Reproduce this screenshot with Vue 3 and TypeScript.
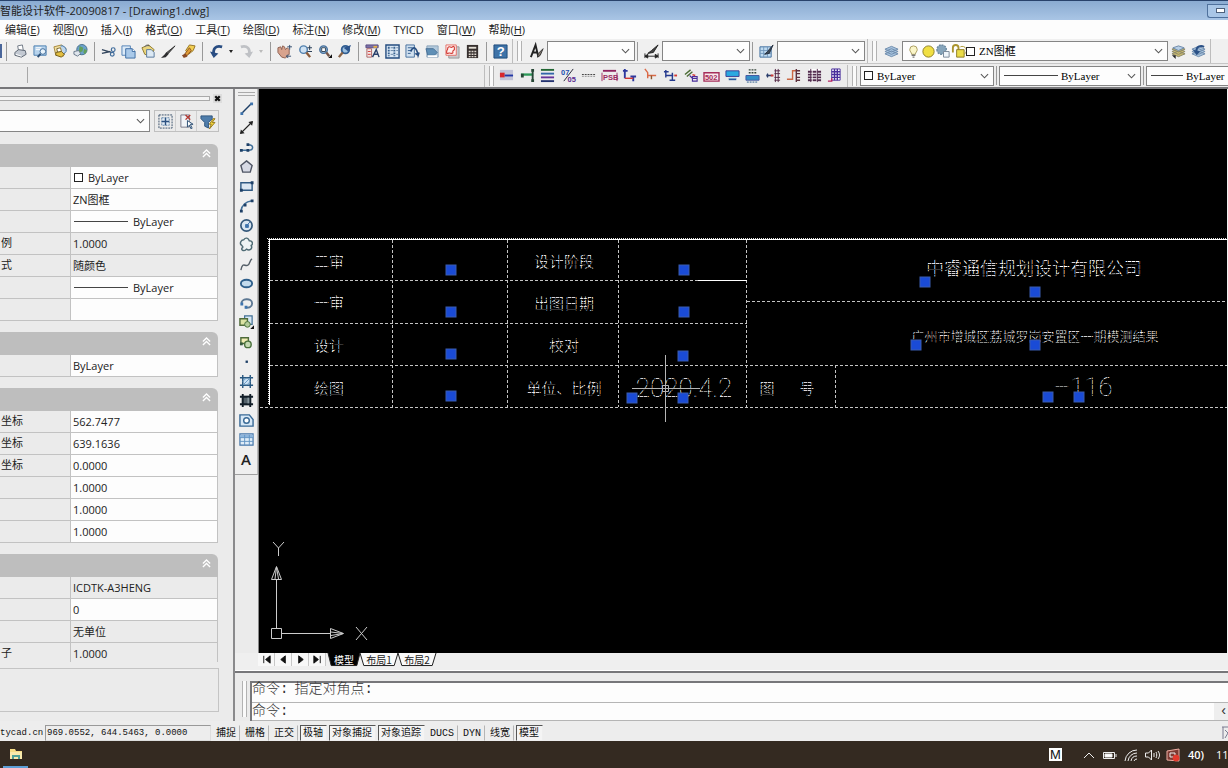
<script setup lang="ts">
type Shape = { d?: string; f?: string; s?: string; w?: number; dash?: string; t?: string; x?: number; y?: number; z?: number }
type Icon = Shape[]

const P = (d: string, f = 'none', s = 'none', w = 1, dash = ''): Shape => ({ d, f, s, w, dash })
const T = (t: string, x: number, y: number, z: number, f: string): Shape => ({ t, x, y, z, f })

const navy = '#1d3f66'
const blue = '#3f74ad'
const pale = '#bcd5ec'
const gold = '#e3bf42'
const red = '#d23a34'
const purple = '#4a2f9c'
const lens = 'M3 6a4 4 0 1 0 8 0a4 4 0 1 0-8 0'
const sheets = 'M1 10.5l7 3 7-3-7-3zM1 8l7 3 7-3-7-3zM1 5.500l7 3 7-3-7-3z'

const icons: Record<string, Icon> = {
  print: [P('M5 2l5-1 1 6-5 1z', '#fff', '#6d7683'), P('M2 9l4-3 7 1 1 4-5 3-7-2z', '#c3c9d2', '#5a6370'), P('M3 11l6 2', 'none', '#fff')],
  preview: [P('M1 2h13v10H1z', '#b7d3ec', '#4c7fb0'), P('M3 4h6M3 6h5', 'none', '#fff'), P('M7.500 8a3 3 0 1 0 6 0a3 3 0 1 0-6 0', '#e8f3fb', '#3c6896'), P('M8 10.500L5 14', 'none', '#2b4d73', 2)],
  publish: [P('M1 3l8-2 5 4-3 8-8-1z', '#f1dfa0', '#a5853a'), P('M8 2a5 5 0 0 1 6 6l-3 3', pale, blue), P('M4 5l4-1 1 4-4 1z', '#fff', '#7c6a33'), P('M3 9l6-1 3 3-3 3-6-2z', gold, '#705c1e')],
  web: [P('M4 6a5.500 5.500 0 1 0 11 0a5.500 5.500 0 1 0-11 0', '#6ba1cc', '#456f8b'), P('M7 2l4 2-1 4-4 1zM12 5l3 2-2 4-2-2z', '#62a05c'), P('M1 8l5-1 2 3-3 3-4-2z', '#dfe5ec', '#67788a')],
  cut: [P('M1 6l10 3M1 10l9-2', 'none', '#34475e', 1.5), P('M11 6a2 2 0 1 0 4 0a2 2 0 1 0-4 0M10 11a2 2 0 1 0 4 0a2 2 0 1 0-4 0', 'none', '#3f6b9b', 1.300)],
  copy: [P('M1 2h9v10H1z', '#dceaf7', '#5382b5'), P('M5 5h7l3 3v7H5z', '#a9c9e9', '#3c6da3'), P('M12 5v3h3', '#fff', '#3c6da3')],
  paste: [P('M1 4l7-3 6 5-3 7-7-2z', '#ead57d', '#8d782c'), P('M6 6h5l3 3v5H6z', '#dce9f4', '#55759a'), P('M4 3l2-2 3 1', '#aaa', '#555')],
  match: [P('M15 2l-8 9-2-1z', '#555', '#333'), P('M6 9l2 2-3 3-5 1 3-3z', '#2d2d2f')],
  brush: [P('M9 1l6 1-2 5-5 4-3-4z', '#f2cf53', '#927021'), P('M9 4L3 12l2 2 6-7z', '#df9b34', '#8e5521'), P('M1 12l4-2 2 3-4 2z', '#8a4a26')],
  undo: [P('M14 3C7 1 4 5 5 12', 'none', '#294d82', 3), P('M1 8l4 7 5-5z', '#294d82')],
  redo: [P('M2 3c7-2 10 2 9 9', 'none', '#bfc1c5', 3), P('M15 8l-4 7-5-5z', '#bfc1c5')],
  pan: [P('M1 4l3-1 1 3 1-4 2 1 1 3 2-2 2 2 0 5-4 4-4-1-4-5z', '#d8a38d', '#8c5f50'), P('M11 3h5M13.500 1v5M10 13h5M12 11l-2 2 2 2', 'none', '#314b6d')],
  zoompm: [P(lens, '#cfe2f3', '#4f7fae', 1.500), P('M10 9l4 5', 'none', '#8a5b3a', 2.500), P('M11 4h5M13.500 1.500v5M11 8h5', 'none', '#203650')],
  zoomwin: [P(lens, '#9dc1e0', '#456f9c', 1.500), P('M5 4h4v4H5z', '#fff', '#345'), P('M10 9l3 4', 'none', '#735447', 2.500), P('M12 15h4v-4z', '#111')],
  zoomprev: [P('M5 6a4 4 0 1 0 8 0a4 4 0 1 0-8 0', '#9dc1e0', '#315e92', 2), P('M6 9l-4 5', 'none', '#896346', 2.500), P('M15 1L7 4l5 4z', '#2c548d')],
  props: [P('M1 1h13v3H1z', '#7d72a7', '#584b83'), P('M2 5h5v9H2z', '#f4e6e6', '#a66'), P('M3 8h3M3 11h3', 'none', red), P('M8 14l4-8 3 8M9 11h5', 'none', '#29406b', 1.500), P('M9 2h4v2H9z', '#e4b048')],
  center: [P('M1 1h14v14H1z', '#dbe8f5', '#244c7f', 1.500), P('M4 3v10M10 3v10', 'none', '#36608f', 2, '2 1'), P('M6 4h3M6 7h3M6 11h3M12 4h3M12 7h2M12 11h2', 'none', '#6785a5')],
  palettes: [P('M1 1h9v13H1z', '#d1e1f0', '#456f9d'), P('M3 4h5M3 7h4M3 10h3', 'none', '#315d8f'), P('M6 8c3-6 6-5 8 4l1-3M14 12l-3-2', 'none', '#294f82', 1.800)],
  sheet: [P('M2 2h12v12H2z', '#b2c9dc', '#8ba2ba'), P('M1 5h8l4 4-3 3H3z', '#5f8fb6', '#486f94'), P('M3 13h10', 'none', '#fff', 2)],
  markup: [P('M4 3h11v12H4z', '#c8c8cb', '#999'), P('M1 1h11v11H1z', '#fff1ef', '#e26d66'), P('M3 4c2-3 3 1 5-1s3 3 1 4 1 3-2 3-2-1-4 0-1-3-1-3 1-1 1-3z', 'none', red, 1.200)],
  calc: [P('M2 1h12v14H2z', '#37302f'), P('M4 3h8v2H4z', '#e4dfd5'), P('M4 8h8M4 11h8M4 13.500h8', 'none', '#ded7cf', 1.500, '2 1')],
  help: [P('M1 1h14v14H1z', '#3e73a8', '#1e4a7a'), T('?', 4, 13, 14, '#fff')],
  textstyle: [P('M2 14L7 1l3 13M3.500 9h5', 'none', '#222', 2), P('M15 5l-5 5-1 4 3-2z', '#82776d', '#333')],
  dimstyle: [P('M1 10v5M15 10v5M1 13h14M1 13l3-2v4zM15 13l-3-2v4z', '#222', '#222'), P('M15 1L8 7l-4 3 6-1z', '#444', '#222')],
  tablestyle: [P('M1 3h12v11H1z', '#c0dbf0', '#3e6d9d'), P('M1 7h12M1 10h12M5 3v11M9 3v11', 'none', '#7298bd'), P('M15 1l-6 7-3 3 5-1z', '#3c4856', '#243040')],
  layers: [P(sheets, '#a8c3de', '#6e8cac')],
  layergo: [P(sheets, '#c9b96f', '#8a8668'), P('M2 4l6-2 6 2-6 3z', '#b6cee5', '#6f8cae'), P('M1 12h4v4z', '#222')],
  layerback: [P(sheets, '#a8c3de', '#6e8cac'), P('M6 8c-1-5 4-7 8-5', 'none', '#2a5086', 2), P('M2 6l4 6 4-4z', '#2a5086')],
  bulb: [P('M4 6a4 4 0 1 1 8 0c0 2-2 3-2 5H6c0-2-2-3-2-5z', '#fbf6c9', '#a89a5c'), P('M6 12h4M7 14h2', 'none', '#777', 1.500)],
  sun: [P('M2 8a6 6 0 1 0 12 0a6 6 0 1 0-12 0', '#f0df43', '#8a7b23')],
  snow: [P('M1 6a5 5 0 1 0 10 0a5 5 0 1 0-10 0', '#87a5bb', '#6c899f', 1.500, '2 1'), P('M8 8h6v6H8z', '#eef5fb', '#789')],
  lock: [P('M2 9V4a3 3 0 0 1 6 0v2', 'none', '#aa942e', 2), P('M6 6h8v8H6z', '#eadc48', '#8d7c26'), P('M10 3a4 4 0 0 1 4 8', 'none', '#aa942e')],
  a1: [P('M1 2h14v11H1z', '#c1c2d6'), P('M1 5h5v5H1z', '#d8262b'), P('M6 8h9', 'none', '#2238a5', 2)],
  a2: [P('M1 7h13', 'none', '#2c9a58', 2.500), P('M1 6h3v4H1zM12 1h3v3h-3zM12 12h3v3h-3z', '#274736'), P('M13.500 3v10', 'none', '#274736', 2)],
  a3: [P('M1 2h14', 'none', '#263', 2), P('M1 6h14', 'none', '#36a', 2), P('M1 10h14', 'none', '#639', 2), P('M1 14h14', 'none', '#23326f', 2)],
  a4: [T('07', 0, 7, 8, '#234fae'), T('05', 7, 15, 8, '#5a2c91'), P('M3 14L13 1', 'none', '#223', 1)],
  a5: [P('M1 7h15', 'none', '#333', 1, '2 1'), P('M1 9h15', 'none', '#999', 1, '2 1')],
  a6: [P('M1 3h14', 'none', '#8e245f', 2), T('PSB', 1, 13, 8, '#9b2c62'), P('M0 5v9M16 5v9', 'none', '#9b2c62')],
  a7: [P('M3 1v10M1 3h5M9 9h6M12 9v5', 'none', '#2e389e', 2), P('M3 11h9', 'none', red, 1.500)],
  a8: [P('M2 1l3 4v6M5 8h9', 'none', '#da6a48', 1.500), P('M9 8v4', 'none', '#8d572c', 1.500)],
  a9: [P('M3 2v8M1 4h5M3 8h8M10 5v8M7 13h6', 'none', '#253a8e', 1.500), P('M12 8h3', 'none', red, 2)],
  a10: [P('M1 7l6-5M3 9l6-5', 'none', '#4b6c35', 1.500), P('M6 8l3 3h5M9 9h5v5H9z', 'none', purple, 1.200), P('M9 7l3 1', 'none', red, 1.500)],
  a11: [P('M0 5h16v9H0z', '#fae9ed', '#a52f5b', 1.500), T('502', 1, 13, 8, '#a52f5b')],
  a12: [P('M1 3h14v6H1z', '#2aa9e1', '#3b3b91'), P('M4 12h8', 'none', '#27599d', 2), P('M4 11h8', 'none', '#79afd6', 1)],
  a13: [P('M4 2h9M4 5h9', 'none', '#37463c', 1.500, '2 1'), P('M1 8h14v5H1z', '#338fc7', '#4155a0'), P('M2 15h12', 'none', '#258', 1, '2 1')],
  a14: [P('M1 8h6M2 6l-1 2 1 2', 'none', '#293d6b', 1.500), P('M5 8h3', 'none', red, 2), P('M10 1v14M13 1v14M9 3h6M9 6h6M9 10h6M9 13h6', 'none', '#542844', 1)],
  a15: [P('M1 12h6V3h4', 'none', '#cb6845', 1.500), P('M11 1v14M11 3h4M11 6h4M11 10h4M11 13h4', 'none', '#5e313d', 1.500)],
  a16: [P('M2 1h12v14H2z', '#fff'), P('M1 4h14M1 7h14M1 10h14M1 13h14', 'none', '#512b4d', 2, '4 1'), P('M4 1v14M11 1v14', 'none', '#512b4d')],
  a17: [P('M5 1h9v12H5z', '#fff', purple), P('M5 4h9M5 7h9M5 10h9M8 1v12M11 1v12', 'none', purple, 1.500), P('M1 14h4v-3', 'none', '#b82361', 1.500)],
  line: [P('M3 13L13 3', 'none', navy, 1.500), P('M1.500 12h3v3h-3zM12 1.500h3v3h-3z', blue)],
  xline: [P('M2 14L14 2', 'none', '#222', 1.500), P('M1 15l1-5 4 4zM15 1l-1 5-4-4z', '#222')],
  pline: [P('M2 11h8c6 0 6-6 0-6', 'none', '#416f98', 1.600), P('M1 9.500h3v3H1zM8 9.500h3v3H8zM8 3.500h3v3H8z', navy)],
  polygon: [P('M8 2l6 5-2 7H4L2 7z', '#d7dae5', '#4f5564', 1.500)],
  rect: [P('M2 4h12v8H2z', '#dce7f2', '#305a83', 1.500), P('M1 10.500h3v3H1zM12.500 2.500h3v3h-3z', navy)],
  arc: [P('M2 14C3 7 7 4 14 3', 'none', '#416f98', 1.500), P('M1 12.500h3v3H1zM5 6h3v3H5zM12.500 1.500h3v3h-3z', navy)],
  circle: [P('M2 8a6 6 0 1 0 12 0a6 6 0 1 0-12 0', '#d8e6f1', '#34587a', 1.800), P('M8 8l4-4M7 7h3v3H7z', blue, blue)],
  cloud: [P('M5 3c2-3 5-2 6 1 4 0 4 4 2 5 2 4-2 6-5 4-2 3-6 1-5-1 2-1 1-2 0-3-3-2-1-6 2-6z', '#edf4f4', '#4e6b74', 1.500)],
  spline: [P('M2 14c2-9 4-4 7-5s2-6 5-7', 'none', '#555f68', 1.500)],
  ellipse: [P('M2 8a6 4 0 1 0 12 0a6 4 0 1 0-12 0', '#c3dbed', '#2e5f8b', 2)],
  earc: [P('M3 8C1 3 14 1 14 8c0 4-4 5-7 4', 'none', '#5d7893', 2), P('M1.500 7h3v3h-3zM6 10.500h3v3H6z', blue)],
  insert: [P('M6 1h8v9H6z', '#d8e8f5', '#427095', 1.300), P('M1 4h8v7H1z', '#dce3a4', '#4e6b3a', 1.500), P('M6 10a3 3 0 1 0 6 0a3 3 0 1 0-6 0', '#b4cc9a', '#49703b'), P('M12 15h4v-4z', '#111')],
  block: [P('M2 3h8v6H2z', '#f1edb4', '#4e6b3a', 1.500), P('M6 10a3.500 3.500 0 1 0 7 0a3.500 3.500 0 1 0-7 0', '#c4d9b2', '#49703b', 1.500), P('M1 8h3v3H1z', '#35593c')],
  point: [P('M7 7h2.500v2.500H7z', navy)],
  hatch: [P('M3 3h10v10H3z', '#cbe2f5'), P('M4 1v14M12 1v14M1 4h14M1 12h14', 'none', '#28577f', 1.500), P('M4 8l4-4M4 12l8-8M8 12l4-4', 'none', '#6698c0')],
  gradient: [P('M3 3h10v10H3z', '#53616a'), P('M4 1v14M12 1v14M1 4h14M1 12h14', 'none', '#111d27', 2), P('M9 5h2v6H9z', '#86969d')],
  region: [P('M1 2h10l4 5v7H1z', '#d7e8f6', '#386996', 1.500), P('M5 8a3 3 0 1 0 6 0a3 3 0 1 0-6 0', '#fff', '#386996', 1.500)],
  table: [P('M1 2h14v12H1z', '#e0edf8', '#4677a9', 1.300), P('M1 3h14v3H1z', '#8db5dc'), P('M1 6h14M1 10h14M6 3v11M11 3v11', 'none', '#6394c3')],
  quick: [P('M1 1h14v14H1z', 'none', '#334c66', 1, '2 1'), P('M4 4h8v8H4z', '#e2edf7', '#6083a8', 1, '2 1'), P('M8 4v8M4 8h8', 'none', '#2b5180', 1.500)],
  pick: [P('M2 1h9v13H2z', '#f0f3f7', '#778'), P('M7 1l5 5M12 1L7 6', 'none', '#b43630', 1.500), P('M9 7v7l2-2 2 4 1-1-2-4h3z', '#fff', '#244970')],
  filter: [P('M1 2h12v3l-4 4v6l-4-2V9L1 5z', '#4f7dab', '#2e547e'), P('M14 5l-4 6h2l-2 5 6-7h-3l3-4z', '#f2d53b', '#94771c')],
}

const fileTools = ['print', 'preview', 'publish', 'web', '|', 'cut', 'copy', 'paste', 'match', 'brush', '|', 'undo', '.', 'redo', '.', '|', 'pan', 'zoompm', 'zoomwin', 'zoomprev', '|', 'props', 'center', 'palettes', 'sheet', 'markup', 'calc', '|', 'help']
const drawTools = ['line', 'xline', 'pline', 'polygon', 'rect', 'arc', 'circle', 'cloud', 'spline', 'ellipse', 'earc', 'insert', 'block', 'point', 'hatch', 'gradient', 'region', 'table']
const plantTools = Array.from({ length: 17 }, (_, i) => 'a' + (i + 1))

const menus: [string, string][] = [['编辑', 'E'], ['视图', 'V'], ['插入', 'I'], ['格式', 'O'], ['工具', 'T'], ['绘图', 'D'], ['标注', 'N'], ['修改', 'M'], ['TYICD', ''], ['窗口', 'W'], ['帮助', 'H']]

type Row = { k: string; v: string; ro?: boolean; box?: boolean; rule?: boolean }
const groups: Row[][] = [
  [{ k: '', v: 'ByLayer', box: true }, { k: '', v: 'ZN图框' }, { k: '', v: 'ByLayer', rule: true }, { k: '例', v: '1.0000', ro: true }, { k: '式', v: '随颜色', ro: true }, { k: '', v: 'ByLayer', rule: true }, { k: '', v: '' }],
  [{ k: '', v: 'ByLayer' }],
  [{ k: '坐标', v: '562.7477' }, { k: '坐标', v: '639.1636' }, { k: '坐标', v: '0.0000' }, { k: '', v: '1.0000' }, { k: '', v: '1.0000' }, { k: '', v: '1.0000' }],
  [{ k: '', v: 'ICDTK-A3HENG', ro: true }, { k: '', v: '0' }, { k: '', v: '无单位', ro: true }, { k: '子', v: '1.0000', ro: true }],
]

const toggles: [string, boolean][] = [['捕捉', false], ['栅格', false], ['正交', false], ['极轴', true], ['对象捕捉', true], ['对象追踪', true], ['DUCS', false], ['DYN', false], ['线宽', false], ['模型', true]]
const navs = ['M3 2v8M10 2L5 6l5 4z', 'M8 2L3 6l5 4z', 'M4 2l5 4-5 4z', 'M9 2v8M2 2l5 4-5 4z']
const tabs = ['模型', '布局1', '布局2']

const dashed = [
  'M270 280.500H747', 'M270 323.500H747', 'M270 365.500H2600', 'M260 407.500H2600', 'M747 301.500H2600',
  'M392.500 240V407', 'M507.500 240V407', 'M618.500 240V407', 'M746.500 240V407', 'M835.500 365V407',
]
const grips = [[451, 270], [451, 312], [451, 354], [451, 396], [684, 270], [684, 312], [683, 356], [683, 398], [632, 398], [925, 282], [1035, 292], [916, 345], [1035, 345], [1048, 397], [1079, 397]]
const notes: [string, number, number, string][] = [
  ['二审', 329, 267, 's'], ['一审', 329, 308, 's'], ['设计', 329, 351, 's'], ['绘图', 329, 394, 's'],
  ['设计阶段', 564, 267, 's'], ['出图日期', 564, 309, 's'], ['校对', 564, 351, 's'], ['单位、比例', 564, 394, 's'],
  ['图', 767, 394, 's'], ['号', 807, 394, 's'],
  ['中睿通信规划设计有限公司', 1034, 275, 'l'], ['广州市增城区荔城罗岗安置区一期模测结果', 1035, 341, 'm'],
  ['2020.4.2', 684, 397, 'n'], ['–116', 1083, 396, 'n'],
]
</script>

<template>
  <div class="app">
    <header class="title">
      <span>智能设计软件-20090817 - [Drawing1.dwg]</span>
      <button class="min" aria-label="最小化"><i></i></button>
    </header>

    <nav class="menu">
      <button v-for="m in menus" :key="m[0]">{{ m[0] }}<template v-if="m[1]">(<u>{{ m[1] }}</u>)</template></button>
    </nav>

    <div class="bar">
      <i class="stub"></i><i class="sep"></i>
      <template v-for="(n, i) in fileTools" :key="i">
        <i v-if="n === '|'" class="sep"></i>
        <button v-else-if="n === '.'" class="drop" :class="{ off: i > 13 }" aria-label="更多"><i></i></button>
        <button v-else class="tool" :aria-label="n">
          <svg viewBox="0 0 16 16"><template v-for="(p, j) in icons[n]" :key="j"><path v-if="p.d" :d="p.d" :fill="p.f" :stroke="p.s" :stroke-width="p.w" :stroke-dasharray="p.dash" /><text v-else :x="p.x" :y="p.y" :font-size="p.z" :fill="p.f">{{ p.t }}</text></template></svg>
        </button>
      </template>
      <i class="edge"></i><i class="grip"></i>
      <template v-for="(n, i) in ['textstyle', 'dimstyle', 'tablestyle']" :key="n">
        <i v-if="i" class="sep thin"></i>
        <button class="tool wide" :aria-label="n">
          <svg viewBox="0 0 16 16"><path v-for="(p, j) in icons[n]" :key="j" :d="p.d" :fill="p.f" :stroke="p.s" :stroke-width="p.w" /></svg>
        </button>
        <div class="combo style">
          <select :aria-label="n"><option></option></select>
          <svg class="chev" viewBox="0 0 10 6"><path d="M1 1l4 4 4-4" /></svg>
        </div>
      </template>
      <i class="edge"></i><i class="grip"></i>
      <button class="tool wide" aria-label="图层特性">
        <svg viewBox="0 0 16 16"><path v-for="(p, j) in icons.layers" :key="j" :d="p.d" :fill="p.f" :stroke="p.s" /></svg>
      </button>
      <div class="combo layer">
        <svg v-for="n in ['bulb', 'sun', 'snow', 'lock']" :key="n" class="state" viewBox="0 0 16 16"><path v-for="(p, j) in icons[n]" :key="j" :d="p.d" :fill="p.f" :stroke="p.s" :stroke-width="p.w" :stroke-dasharray="p.dash" /></svg>
        <i class="swatch"></i>
        <select aria-label="图层"><option>ZN图框</option></select>
        <svg class="chev" viewBox="0 0 10 6"><path d="M1 1l4 4 4-4" /></svg>
      </div>
      <button v-for="n in ['layergo', 'layerback']" :key="n" class="tool" :aria-label="n">
        <svg viewBox="0 0 16 16"><path v-for="(p, j) in icons[n]" :key="j" :d="p.d" :fill="p.f" :stroke="p.s" :stroke-width="p.w" /></svg>
      </button>
      <i class="edge"></i>
    </div>

    <div class="bar second">
      <div class="lead"><i></i></div>
      <i class="edge"></i><i class="grip"></i>
      <div class="plant">
        <button v-for="n in plantTools" :key="n" :aria-label="n">
          <svg viewBox="0 0 16 16"><template v-for="(p, j) in icons[n]" :key="j"><path v-if="p.d" :d="p.d" :fill="p.f" :stroke="p.s" :stroke-width="p.w" :stroke-dasharray="p.dash" /><text v-else :x="p.x" :y="p.y" :font-size="p.z" :fill="p.f">{{ p.t }}</text></template></svg>
        </button>
      </div>
      <i class="edge"></i><i class="grip"></i>
      <div class="combo serif color">
        <i class="swatch"></i>
        <select aria-label="颜色"><option>ByLayer</option></select>
        <svg class="chev" viewBox="0 0 10 6"><path d="M1 1l4 4 4-4" /></svg>
      </div>
      <i class="sep thin"></i>
      <div class="combo serif ltype">
        <i class="rule"></i>
        <select aria-label="线型"><option>ByLayer</option></select>
        <svg class="chev" viewBox="0 0 10 6"><path d="M1 1l4 4 4-4" /></svg>
      </div>
      <i class="sep thin"></i>
      <div class="combo serif weight">
        <i class="rule short"></i>
        <select aria-label="线宽"><option>ByLayer</option></select>
      </div>
    </div>

    <main class="work">
      <aside class="panel">
        <div class="cap"><i></i><button aria-label="关闭"><svg viewBox="0 0 8 8"><path d="M2 2l4 4M6 2L2 6" /></svg></button></div>
        <div class="pick">
          <div class="combo">
            <select aria-label="对象类型"><option></option></select>
            <svg class="chev" viewBox="0 0 10 6"><path d="M1 1l4 4 4-4" /></svg>
          </div>
          <div class="trio">
            <button v-for="n in ['quick', 'pick', 'filter']" :key="n" :aria-label="n">
              <svg viewBox="0 0 16 16"><path v-for="(p, j) in icons[n]" :key="j" :d="p.d" :fill="p.f" :stroke="p.s" :stroke-width="p.w" :stroke-dasharray="p.dash" /></svg>
            </button>
          </div>
        </div>
        <div class="props">
          <section v-for="(g, gi) in groups" :key="gi">
            <button class="head" aria-label="折叠"><svg viewBox="0 0 10 10"><path d="M1 5l4-4 4 4M1 9l4-4 4 4" /></svg></button>
            <table>
              <tbody>
                <tr v-for="(r, ri) in g" :key="ri">
                  <th scope="row">{{ r.k }}</th>
                  <td :class="{ ro: r.ro }"><div><i v-if="r.box" class="swatch"></i><i v-if="r.rule" class="rule"></i>{{ r.v }}</div></td>
                </tr>
              </tbody>
            </table>
          </section>
        </div>
        <div class="hint"></div>
      </aside>

      <div class="right">
        <div class="stage">
          <div class="draw">
            <div class="strip">
              <i class="hgrip"></i>
              <button v-for="n in drawTools" :key="n" :aria-label="n">
                <svg viewBox="0 0 16 16"><path v-for="(p, j) in icons[n]" :key="j" :d="p.d" :fill="p.f" :stroke="p.s" :stroke-width="p.w" /></svg>
              </button>
              <button class="mtext">A</button>
            </div>
          </div>
          <div class="view">
            <svg class="cad" width="100%" height="100%">
              <defs>
                <pattern id="broken" width="4" height="5" patternUnits="userSpaceOnUse">
                  <path d="M0 0h4v4H0z" fill="#fff" />
                  <path d="M3 0h1v4H3z" fill="#000" fill-opacity=".55" />
                  <path d="M0 4h4v1H0z" fill="#fff" fill-opacity=".25" />
                </pattern>
              </defs>
              <g transform="translate(-260 -89)">
                <path d="M269 239.500H2600M269.500 239V405" class="solid" />
                <path d="M267 238.500H2600M268.500 239V405" class="dots" />
                <path v-for="d in dashed" :key="d" :d="d" class="dash" />
                <path d="M698 280.500H747" class="solid" />
                <text v-for="n in notes" :key="n[0]" :x="n[1]" :y="n[2]" :class="n[3]" class="note">{{ n[0] }}</text>
                <rect v-for="(g, i) in grips" :key="i" :x="g[0] - 5" :y="g[1] - 5" width="10" height="10" class="node" />
                <path class="cross" d="M665.500 355V422M632 388.500H700M662.500 385.500h6v6h-6z" />
                <path class="ucs" d="M271.500 628.500h10v10h-10zM276.500 628V579M271.500 579.500h10l-5-13zM275 579l1.500-12 2 12M282 633.500h49M330.500 628.500v10l13-5zM331 632l12 1.500-12 2M273 542l5.500 6 5.500-6M278.500 548v8M356 627l11 13M367 627l-11 13" />
              </g>
            </svg>
          </div>
        </div>
        <div class="tabs">
          <button v-for="(d, i) in navs" :key="i" class="nav" aria-label="翻页"><svg viewBox="0 0 12 12"><path :d="d" /></svg></button>
          <button v-for="(t, i) in tabs" :key="t" class="tab" :class="{ on: i === 0 }">
            <svg viewBox="0 0 40 14" preserveAspectRatio="none"><path d="M0 0l4 13.500h32L40 0" vector-effect="non-scaling-stroke" /></svg>
            <span>{{ t }}</span>
          </button>
        </div>
        <div class="console">
          <i class="grip"></i>
          <div class="lines">
            <p><span>命令:</span><span>指定对角点:</span></p>
            <label><span>命令:</span><input type="text" aria-label="命令" /><b>‹</b></label>
          </div>
        </div>
      </div>
    </main>

    <footer class="status">
      <span class="site">tycad.cn</span>
      <output>969.0552, 644.5463, 0.0000</output>
      <button v-for="t in toggles" :key="t[0]" :class="{ on: t[1] }">{{ t[0] }}</button>
      <svg class="comm" viewBox="0 0 6 14"><path d="M0 1h6M1 1v12M3 4l3 3-3 5" /></svg>
    </footer>

    <div class="taskbar">
      <button class="folder" aria-label="文件资源管理器">
        <svg viewBox="0 0 14 12"><path d="M1 1h5l1 2h6v8H1z" fill="#f5dc86" /><path d="M1 4h12v7H1z" fill="#f8e9ac" /><path d="M3 7h8v4H9V9H5v2H3z" fill="#4fa097" /></svg>
      </button>
      <span class="ime">M</span>
      <svg class="t" viewBox="0 0 16 16"><path d="M3 11l5-5 5 5" /></svg>
      <svg class="t" viewBox="0 0 16 16"><path d="M1.500 5.500h11v6h-11zM14 7v3" /><path class="full" d="M3 7h7v3H3z" /></svg>
      <svg class="t" viewBox="0 0 16 16"><path d="M2 14A12 12 0 0 1 14 3M5 14a9 9 0 0 1 9-8M8 14a6 6 0 0 1 6-5M11 14a3 3 0 0 1 3-2" /></svg>
      <svg class="t" viewBox="0 0 16 16"><path d="M1.500 6v4h3l3 3V3l-3 3zM10 6v4M12 5c1 2 1 4 0 6M14 4c2 3 2 5 0 8" /></svg>
      <svg class="t" viewBox="0 0 16 16"><path class="warm" d="M2 4l12-2v12L2 13z" /><path d="M5 6h5v4H5z" /><path class="alert" d="M8 11a3 3 0 1 0 6 0a3 3 0 1 0-6 0" /></svg>
      <span class="temp">40)</span>
      <span class="clock">11</span>
    </div>
  </div>
</template>

<style>
html, body { height: 100%; overflow: hidden; }
</style>

<style scoped>
.app { display: flex; flex-direction: column; height: 100vh; overflow: hidden; background: #ebebeb; color: #222; font: 11px/16px "Open Sans", "Noto Sans CJK SC", sans-serif; white-space: nowrap; }
.app * { box-sizing: border-box; }
button { border: 0; padding: 0; background: none; color: inherit; font: inherit; }
svg { display: block; overflow: visible; }
i { display: block; flex: none; }
select, input { font: inherit; color: inherit; }

.title { display: flex; align-items: center; justify-content: space-between; height: 20px; flex: none; background: linear-gradient(#8aabd1, #a9c5e5); border-top: 1px solid #28426b; overflow: hidden; }
.min { width: 21px; height: 14px; border: 1px solid #4f719c; border-right: 0; border-radius: 0 0 0 3px; background: #a9c6e6; display: grid; place-items: center end; }
.min i { width: 9px; height: 5px; border: 1px solid #4d607b; background: #fff; margin-right: 3px; }
.menu { display: flex; gap: 13px; height: 19px; padding-left: 5px; align-items: center; background: #fdfdfd; flex: none; }

.bar { display: flex; align-items: center; height: 25px; flex: none; background: #f0f0f0; border-bottom: 1px solid #c6c6c6; overflow: hidden; }
.bar.second { background: #ececec; border-bottom: 2px solid #77777a; }
.bar text { font-family: "Liberation Sans", sans-serif; font-weight: 700; }
.stub { width: 2px; height: 14px; background: #4a669a; }
.sep { width: 8px; height: 19px; background: linear-gradient(#999, #999) center / 1px 100% no-repeat; }
.sep.thin { width: 5px; }
.tool { width: 20px; height: 20px; display: grid; place-items: center; flex: none; }
.tool.wide { width: 22px; }
.tool svg { width: 15px; height: 15px; }
.drop { width: 10px; height: 20px; display: grid; place-items: center; flex: none; }
.drop i { border: 2px solid transparent; border-top: 3px solid #222; border-bottom: 0; }
.drop.off i { border-top-color: #bbb; }
.edge { width: 3px; height: 24px; border-right: 1px solid #bdbdbd; }
.grip { width: 5px; height: 20px; margin: 0 3px 0 4px; border: 1px solid #b2b2b2; border-width: 0 1px; background: #fafafa; }
.combo { display: flex; align-items: center; height: 20px; border: 1px solid #858585; background: #fdfdfd; padding: 0 4px 0 3px; flex: none; }
.combo select { flex: 1; min-width: 0; height: 16px; border: 0; padding: 0; background: none; appearance: none; outline: 0; }
.chev { width: 9px; height: 6px; flex: none; }
.chev path { fill: none; stroke: #555; stroke-width: 1.200; }
.style { width: 88px; }
.layer { width: 266px; font-family: "Liberation Serif", "Noto Sans CJK SC", serif; color: #000; }
.state { width: 15px; height: 15px; flex: none; }
.swatch { width: 9px; height: 9px; border: 1px solid #222; background: #fff; margin-right: 4px; }
.rule { width: 54px; height: 1px; background: #444; margin: 0 5px 0 1px; }
.serif { font-family: "Liberation Serif", serif; color: #000; }
.color { width: 134px; }
.ltype { width: 142px; }
.ltype .rule { margin-right: 3px; }
.weight { flex: 1 0 80px; }
.weight .short { width: 32px; margin-right: 3px; }
.lead { width: 482px; height: 18px; flex: none; }
.lead i { width: 28px; height: 16px; border-right: 1px solid #a8a8a8; }
.plant { display: flex; justify-content: space-between; width: 348px; padding: 0 2px; flex: none; }
.plant button { width: 16px; height: 16px; }
.plant svg { width: 15px; height: 15px; }
.second .edge { height: 22px; }

.work { display: flex; flex: 1; min-height: 0; }
.panel { width: 235px; flex: none; display: flex; flex-direction: column; border-right: 2px solid #8a8a8c; background: #ebebeb; padding-bottom: 9px; }
.cap { display: flex; align-items: center; gap: 3px; height: 18px; flex: none; }
.cap i { width: 210px; height: 5px; border: 1px solid #aaa; border-left: 0; background: #f4f4f4; }
.cap button { width: 9px; height: 9px; background: #ddd; }
.cap svg { width: 9px; height: 9px; }
.cap path { stroke: #111; stroke-width: 2; }
.pick { display: flex; gap: 4px; align-items: center; height: 28px; margin-bottom: 9px; flex: none; }
.pick .combo { width: 150px; height: 22px; border-left: 0; }
.trio { display: flex; border: 1px solid #c0c0c0; height: 22px; }
.trio button { width: 21px; display: grid; place-items: center; border-right: 1px solid #cfcfcf; }
.trio button:last-child { border-right: 0; }
.trio svg { width: 15px; height: 15px; }
.props { flex: 1; min-height: 0; overflow: hidden; margin-bottom: 6px; }
.props section { width: 218px; margin-bottom: 11px; }
.head { width: 100%; height: 23px; display: flex; justify-content: flex-end; align-items: flex-start; padding: 5px 7px; background: #bebebe; border-radius: 0 6px 0 0; }
.head svg { width: 9px; height: 9px; }
.head path { fill: none; stroke: #fff; stroke-width: 1.500; }
.props table { width: 100%; border-collapse: separate; border-spacing: 0; table-layout: fixed; }
.props tr { height: 22px; }
.props th { width: 70px; padding: 0 0 2px 1px; font-weight: 400; text-align: left; border-bottom: 1px solid #c2c2c2; }
.props td { padding: 0 0 0 2px; background: #fdfdfd; border: 1px solid #c2c2c2; border-top: 0; }
.props td.ro { background: #ebebeb; }
.props td div { display: flex; align-items: center; height: 21px; }
.props .swatch { margin: 0 5px 0 1px; }
.hint { width: 219px; height: 44px; border: 1px solid #c4c4c4; border-left: 0; flex: none; }

.right { flex: 1; min-width: 0; display: flex; flex-direction: column; }
.stage { flex: 1; min-height: 0; display: flex; border-right: 1px solid #f4f4f4; }
.draw { width: 24px; flex: none; border-right: 1px solid #888; }
.strip { display: flex; flex-direction: column; align-items: center; border-bottom: 1px solid #a0a0a0; border-right: 1px solid #bbb; padding-bottom: 5px; background: #efefef; }
.hgrip { width: 17px; height: 4px; margin: 3px 0 2px; border: 1px solid #aaa; border-width: 1px 0; }
.strip button { height: 20px; width: 20px; display: grid; place-items: center; }
.strip button:nth-child(odd) { height: 19px; }
.strip svg { width: 15px; height: 15px; }
.strip .mtext { font: 600 15px/18px "Open Sans", sans-serif; }
.view { flex: 1; min-width: 0; background: #000; border-left: 1px solid #000; }
.cad { overflow: hidden; }
.solid { stroke: #fff; fill: none; }
.dots { stroke: #ddd; fill: none; stroke-dasharray: 1 1; }
.dash { stroke: #c4c4c4; fill: none; stroke-dasharray: 3 2; }
.note { fill: url(#broken); text-anchor: middle; font-family: "Noto Sans CJK SC", sans-serif; font-weight: 300; }
.s { font-size: 15px; }
.m { font-size: 13px; }
.l { font-size: 18px; }
.n { font: 100 26px "Roboto", sans-serif; }
.node { fill: #1a4bd6; stroke: #3a5cae; }
.cross { stroke: #b5b5b5; fill: none; }
.ucs { stroke: #ccc; fill: none; }

.tabs { display: flex; height: 18px; flex: none; padding-left: 23px; background: #efefef; border-bottom: 1px solid #fff; }
.nav { width: 17px; height: 13px; border-right: 1px solid #c8c8c8; display: grid; place-items: center; background: #f8f8f8; }
.nav svg { width: 11px; height: 11px; }
.nav path { fill: #111; stroke: #111; }
.nav:nth-child(4) { margin-right: 2px; }
.tab { position: relative; width: 38px; height: 13px; color: #222; font: 10px/12px "Noto Sans CJK SC", sans-serif; }
.tab.on { width: 32px; color: #fff; }
.tab svg { position: absolute; inset: 0; width: 100%; height: 100%; }
.tab path { fill: #fafafa; stroke: #222; }
.tab.on path { fill: #000; }
.tab span { position: relative; }
.console { display: flex; height: 50px; flex: none; border-top: 2px solid #77777a; padding: 8px 0 0 3px; background: #ebebeb; }
.console .grip { height: 36px; }
.lines { flex: 1; min-width: 0; border-top: 2px solid #77777a; border-left: 2px solid #77777a; background: #fdfdfd; color: #333; font: 14px/18px "Liberation Mono", "Noto Sans CJK SC", monospace; font-weight: 300; }
.lines p { display: flex; gap: 6px; margin: 0; height: 20px; line-height: 12px; border-bottom: 1px solid #b5b5b5; }
.lines label { display: flex; height: 18px; line-height: 16px; border-bottom: 1px solid #b5b5b5; }
.lines input { flex: 1; min-width: 0; border: 0; outline: 0; background: none; padding: 0; }
.lines b { width: 14px; text-align: right; background: #eee; }

.status { display: flex; align-items: center; height: 20px; flex: none; background: #ededed; padding-top: 4px; font: 9px/15px "Liberation Mono", "Noto Sans CJK SC", monospace; color: #111; }
.site { width: 43px; margin-right: 2px; text-align: right; }
.status output { width: 166px; height: 16px; border: 1px solid #b0b0b0; border-color: #999 #ddd #ddd #999; padding-left: 1px; margin-right: 2px; }
.status button { height: 16px; padding: 1px 3px 0 2px; border: 1px solid transparent; border-right-color: #b5b5b5; font: 10px/13px "Liberation Mono", "Noto Sans CJK SC", monospace; margin-right: 2px; }
.status button.on { border-color: #555 #eee #eee #555; background: #f4f4f4; }
.comm { width: 6px; height: 14px; margin-left: auto; }
.comm path { fill: none; stroke: #7a7a90; }

.taskbar { display: flex; align-items: center; height: 27px; flex: none; background: #342a21; color: #fff; font-size: 11px; overflow: hidden; }
.folder { width: 25px; height: 27px; margin: 0 auto 0 3px; display: grid; place-items: center; border-bottom: 2px solid #5d9fd6; }
.folder svg { width: 14px; height: 12px; }
.ime { width: 13px; height: 13px; background: #fff; color: #111; font: 13px/13px "Liberation Sans", sans-serif; text-align: center; margin-right: 19px; }
.t { width: 16px; height: 16px; margin-right: 5px; flex: none; }
.t path { fill: none; stroke: #eee; }
.t .full { fill: #fff; }
.t .warm { stroke: #f0b0a4; fill: #7d3a32; }
.t .alert { fill: #e23a2e; stroke: #e23a2e; }
.temp { width: 20px; text-align: center; margin-right: 10px; font-weight: 600; }
.clock { width: 12px; }
</style>
